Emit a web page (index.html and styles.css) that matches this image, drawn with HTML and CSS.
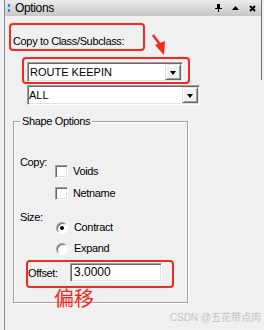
FILE: index.html
```html
<!DOCTYPE html>
<html lang="en">
<head>
  <meta charset="UTF-8" />
  <title>Options</title>
  <link rel="stylesheet" href="styles.css">
</head>
<body>
  <div class="panel">
    <!-- Docked window caption -->
    <div class="titlebar">
      <span class="grip"></span>
      <span class="title">Options</span>
      <span class="tools">
        <svg width="7" height="8" viewBox="0 0 7 8"><path d="M2 0h3v4H2zM0 4h7v1H0zM3 5h1v3H3z" fill="#000"/></svg>
        <svg width="7" height="4" viewBox="0 0 7 4"><path d="M3.5 0L7 4H0z" fill="#000"/></svg>
        <svg width="7" height="7" viewBox="0 0 7 7"><path d="M1 1l5 5M6 1L1 6" stroke="#000" stroke-width="2"/></svg>
      </span>
    </div>

    <div class="content">
      <div class="mark mark-label">Copy to Class/Subclass:</div>

      <div class="mark mark-combo">
        <div class="combo combo-class">
          <span class="combo-text">ROUTE KEEPIN</span>
          <span class="combo-btn"></span>
        </div>
      </div>

      <div class="combo combo-sub">
        <span class="combo-text">ALL</span>
        <span class="combo-btn"></span>
      </div>

      <div class="group">
        <div class="legend">Shape Options</div>

        <div class="opt-block">
          <div class="opt-label">Copy:</div>
          <div class="opt-list">
            <label class="opt"><span class="check"></span>Voids</label>
            <label class="opt"><span class="check"></span>Netname</label>
          </div>
        </div>

        <div class="opt-block size-block">
          <div class="opt-label">Size:</div>
          <div class="opt-list radios">
            <label class="opt"><span class="radio on"></span>Contract</label>
            <label class="opt"><span class="radio"></span>Expand</label>
          </div>
        </div>

        <div class="mark mark-offset">
          <span class="offset-label">Offset:</span>
          <span class="field">3.0000</span>
        </div>
      </div>
    </div>

    <!-- annotations drawn on top of the dialog -->
    <svg class="arrow" width="16" height="22" viewBox="0 0 16 22">
      <path d="M2 1l8 11" stroke="#f5291c" stroke-width="2.5" fill="none"/>
      <path d="M4 11l10-4-1 14z" fill="#f5291c"/>
    </svg>
    <div class="note">偏移</div>
    <div class="watermark">CSDN @五花带点肉</div>
  </div>
</body>
</html>
```

FILE: styles.css
```css
body {
  margin: 0;
  background: #f0f0f0;
  font-family: "Liberation Sans", Arial, sans-serif;
  font-size: 11px;
  letter-spacing: -0.35px;
  color: #000;
}

.panel {
  position: relative;
  margin-left: 4px;
  width: 258px;
  height: 330px;
  border-left: 1px solid #8a8a8a;
  box-sizing: border-box;
  overflow: hidden;
}

/* right frame edge of the docked pane */
.panel::after {
  content: "";
  position: absolute;
  right: 0;
  top: 0;
  width: 1px;
  height: 80px;
  background: #6e6e6e;
}

/* Caption bar */
.titlebar {
  display: flex;
  align-items: center;
  height: 16px;
  background: linear-gradient(#ececec, #c6c6c6);
}

.grip {
  width: 2px;
  height: 8px;
  margin: 0 5px 0 3px;
  background: repeating-linear-gradient(#2f86e8 0 3px, transparent 3px 5px);
}

.title {
  font-size: 12px;
  line-height: 16px;
  flex: 1;
}

.tools {
  display: flex;
  align-items: center;
  gap: 10px;
  margin-right: 6px;
}

.content {
  padding: 7px 0 0 4px;
}

/* red hand-drawn highlight boxes */
.mark {
  border: 2px solid #f5291c;
  border-radius: 4px;
  box-sizing: border-box;
}

.mark-label {
  display: flex;
  align-items: flex-end;
  width: 136px;
  height: 28px;
  padding: 0 2px 1px;
  line-height: 13px;
}

.mark-combo {
  width: 168px;
  height: 27px;
  margin: 6px 0 0 13px;
  padding: 3px 0 0 3px;
}

/* sunken combo box */
.combo {
  display: flex;
  align-items: center;
  height: 20px;
  background: #fff;
  border-top: 1px solid #a0a0a0;
  border-left: 1px solid #a0a0a0;
  border-bottom: 1px solid #fff;
  border-right: 1px solid #fff;
  box-shadow: inset 1px 1px 0 #696969, inset -1px -1px 0 #e3e3e3;
  box-sizing: border-box;
  letter-spacing: 0;
}

.combo-class {
  width: 156px;
}

.combo-sub {
  width: 173px;
  margin: 1px 0 0 18px;
}

.combo-text {
  flex: 1;
  padding-left: 2px;
  line-height: 13px;
}

.combo-sub .combo-text {
  padding-left: 1px;
}

.combo-btn {
  position: relative;
  width: 16px;
  height: 16px;
  margin-right: 1px;
  background: #f0f0f0;
  border-top: 1px solid #e3e3e3;
  border-left: 1px solid #e3e3e3;
  border-right: 1px solid #696969;
  border-bottom: 1px solid #696969;
  box-shadow: inset 1px 1px 0 #fff, inset -1px -1px 0 #a0a0a0;
  box-sizing: border-box;
}

.combo-btn::after {
  content: "";
  position: absolute;
  left: 4px;
  top: 6px;
  border-left: 3.5px solid transparent;
  border-right: 3.5px solid transparent;
  border-top: 4px solid #000;
}

/* etched group box */
.group {
  width: 175px;
  margin: 16px 0 0 4px;
  padding: 0 6px 14px;
  border: 1px solid #a0a0a0;
  box-shadow: 1px 1px 0 #fff, inset 1px 1px 0 #fff;
  box-sizing: border-box;
}

.legend {
  display: table;
  margin-top: -7px;
  padding: 0 2px;
  background: #f0f0f0;
  line-height: 13px;
}

.opt-block {
  display: flex;
  margin-top: 28px;
  line-height: 13px;
}

.size-block {
  margin-top: 11px;
}

.opt-label {
  width: 35px;
}

.opt-list {
  display: flex;
  flex-direction: column;
  gap: 9px;
  margin-top: 9px;
}

.radios {
  gap: 8px;
  margin-top: 10px;
}

.opt {
  display: flex;
  align-items: center;
  gap: 5px;
  height: 13px;
}

.check {
  width: 13px;
  height: 13px;
  background: #fff;
  border-top: 1px solid #a0a0a0;
  border-left: 1px solid #a0a0a0;
  border-bottom: 1px solid #fff;
  border-right: 1px solid #fff;
  box-shadow: inset 1px 1px 0 #696969, inset -1px -1px 0 #e3e3e3;
  box-sizing: border-box;
}

.radio {
  position: relative;
  width: 12px;
  height: 12px;
  margin-left: 1px;
  margin-right: 1px;
  border-radius: 50%;
  background: #fff;
  border: 1px solid;
  border-color: #a0a0a0 #fff #fff #a0a0a0;
  box-shadow: inset 1px 1px 0 #696969;
  box-sizing: border-box;
}

.radio.on::after {
  content: "";
  position: absolute;
  left: 3px;
  top: 3px;
  width: 4px;
  height: 4px;
  border-radius: 50%;
  background: #000;
}

.mark-offset {
  display: flex;
  align-items: flex-start;
  width: 148px;
  height: 28px;
  margin: 5px 0 0 6px;
  padding-top: 1px;
}

.offset-label {
  width: 42px;
  padding-top: 4px;
  line-height: 13px;
}

.field {
  width: 92px;
  height: 19px;
  padding-left: 3px;
  line-height: 17px;
  font-size: 12px;
  letter-spacing: 0;
  background: #fff;
  border-top: 1px solid #a0a0a0;
  border-left: 1px solid #a0a0a0;
  border-bottom: 1px solid #fff;
  border-right: 1px solid #fff;
  box-shadow: inset 1px 1px 0 #696969, inset -1px -1px 0 #e3e3e3;
  box-sizing: border-box;
}

.arrow {
  position: absolute;
  left: 146px;
  top: 34px;
}

.note {
  position: absolute;
  left: 49px;
  top: 286px;
  font-family: "Noto Sans CJK SC", sans-serif;
  font-size: 20px;
  line-height: 24px;
  letter-spacing: 0;
  color: #f5291c;
}

.watermark {
  position: absolute;
  right: 1px;
  bottom: 6px;
  font-family: "Liberation Sans", "Noto Sans CJK SC", sans-serif;
  font-size: 10px;
  line-height: 12px;
  letter-spacing: 0;
  color: #c4c4c4;
}
```
